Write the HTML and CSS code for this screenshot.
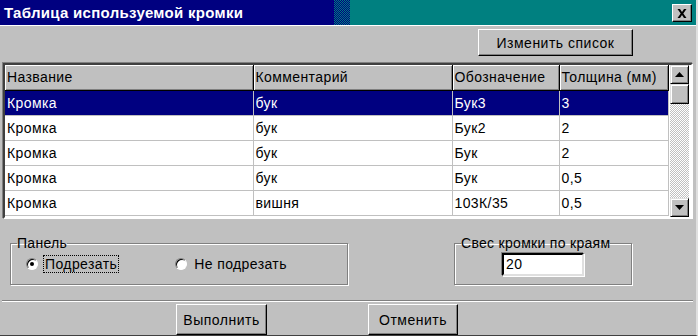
FILE: index.html
```html
<!DOCTYPE html>
<html lang="ru">
<head>
    <meta charset="UTF-8">
    <title>Таблица используемой кромки</title>
    <link rel="stylesheet" href="styles.css">
</head>
<body>
    <div class="window">
        <div class="titlebar">
            <span class="title">Таблица используемой кромки</span>
            <span class="dither"></span>
            <span class="teal"></span>
            <button class="close-btn">
                <svg width="10" height="9" viewBox="0 0 10 9"><path d="M0.5 0h2.5l2 3 2-3h2.5L6.3 4.5 9.5 9H7L5 6 3 9H0.5l3.2-4.5z" fill="#000"/></svg>
            </button>
        </div>

        <div class="client">
            <div class="toolbar">
                <button class="btn btn-edit">Изменить список</button>
            </div>

            <div class="grid">
                <div class="grid-body">
                    <table class="grid-table">
                        <thead>
                            <tr>
                                <th class="c1">Название</th>
                                <th class="c2">Комментарий</th>
                                <th class="c3">Обозначение</th>
                                <th class="c4">Толщина (мм)</th>
                            </tr>
                        </thead>
                        <tbody>
                            <tr class="selected"><td>Кромка</td><td>бук</td><td>Бук3</td><td>3</td></tr>
                            <tr><td>Кромка</td><td>бук</td><td>Бук2</td><td>2</td></tr>
                            <tr><td>Кромка</td><td>бук</td><td>Бук</td><td>2</td></tr>
                            <tr><td>Кромка</td><td>бук</td><td>Бук</td><td>0,5</td></tr>
                            <tr><td>Кромка</td><td>вишня</td><td>103К/35</td><td>0,5</td></tr>
                        </tbody>
                    </table>
                </div>
                <div class="scrollbar">
                    <div class="sb-btn">
                        <svg width="9" height="5" viewBox="0 0 9 5"><path d="M4.5 0L9 5H0z" fill="#000"/></svg>
                    </div>
                    <div class="sb-thumb"></div>
                    <div class="sb-track"></div>
                    <div class="sb-btn">
                        <svg width="9" height="5" viewBox="0 0 9 5"><path d="M0 0h9L4.5 5z" fill="#000"/></svg>
                    </div>
                </div>
            </div>

            <div class="options">
                <fieldset class="group group-panel">
                    <legend>Панель</legend>
                    <div class="radios">
                        <label class="radio checked"><span class="radio-dot"></span><span class="radio-label focus">Подрезать</span></label>
                        <label class="radio"><span class="radio-dot"></span><span class="radio-label">Не подрезать</span></label>
                    </div>
                </fieldset>
                <fieldset class="group group-overhang">
                    <legend>Свес кромки по краям</legend>
                    <div class="field">20</div>
                </fieldset>
            </div>

            <div class="footer">
                <button class="btn btn-run">Выполнить</button>
                <button class="btn btn-cancel">Отменить</button>
            </div>
        </div>
    </div>
</body>
</html>
```

FILE: styles.css
```css
* {
    margin: 0;
    padding: 0;
    box-sizing: border-box;
}

body {
    background-color: #c0c0c0;
    font-family: 'Liberation Sans', Arial, sans-serif;
    font-size: 14px;
    letter-spacing: 0.4px;
    color: #000;
}

.window {
    width: 698px;
    height: 336px;
    display: flex;
    flex-direction: column;
    background-color: #c0c0c0;
    border-right: 2px solid #dfdfdf;
    border-bottom: 1px solid #404040;
    overflow: hidden;
}

.titlebar {
    height: 26px;
    flex-shrink: 0;
    display: flex;
    align-items: center;
    background-color: #008080;
    border-bottom: 1px solid #fff;
    position: relative;
}

.title {
    width: 334px;
    height: 100%;
    display: flex;
    align-items: center;
    padding-left: 4px;
    background-color: #000080;
    color: #fff;
    font-weight: bold;
    font-size: 15px;
    letter-spacing: 0.3px;
}

.dither {
    width: 16px;
    height: 100%;
    background-image: repeating-conic-gradient(#000080 0 25%, #008080 0 50%);
    background-size: 2px 2px;
}

.teal {
    flex: 1;
    height: 100%;
}

.close-btn {
    position: absolute;
    right: 4px;
    top: 4px;
    width: 20px;
    height: 18px;
    display: flex;
    align-items: center;
    justify-content: center;
    background-color: #c0c0c0;
    border: 1px solid;
    border-color: #fff #000 #000 #fff;
    box-shadow: inset -1px -1px 0 #808080;
}

.client {
    flex: 1;
    display: flex;
    flex-direction: column;
    padding: 0 3px 0 2px;
}

.toolbar {
    height: 37px;
    flex-shrink: 0;
    display: flex;
    justify-content: flex-end;
    padding: 3px 60px 0 0;
}

.btn {
    font-family: 'Liberation Sans', Arial, sans-serif;
    font-size: 14px;
    letter-spacing: 0.5px;
    background-color: #c0c0c0;
    border: 1px solid;
    border-color: #fff #000 #000 #fff;
    box-shadow: inset -1px -1px 0 #808080;
    color: #000;
}

.btn-edit {
    width: 155px;
    height: 27px;
}

.grid {
    height: 156px;
    flex-shrink: 0;
    display: flex;
    background-color: #fff;
    border: 2px solid;
    border-color: #404040 #fff #fff #404040;
    box-shadow: -1px -1px 0 #808080;
    margin-left: 1px;
}

.grid-body {
    flex: 1;
    overflow: hidden;
}

.grid-table {
    border-collapse: collapse;
    table-layout: fixed;
    width: 663px;
}

.grid-table th,
.grid-table td {
    height: 25px;
    padding: 0 0 0 2px;
    text-align: left;
    font-weight: normal;
    white-space: nowrap;
    border-right: 1px solid #c0c0c0;
    border-bottom: 1px solid #c0c0c0;
}

.grid-table th {
    background-color: #c0c0c0;
    border-right: 1px solid #000;
    border-bottom: 1px solid #000;
    box-shadow: inset 1px 1px 0 #fff, inset -1px -1px 0 #808080;
}

.grid-table .c1 { width: 248px; }
.grid-table .c2 { width: 199px; }
.grid-table .c3 { width: 107px; }
.grid-table .c4 { width: 109px; }

.grid-table tr.selected td {
    background-color: #000080;
    color: #fff;
}

.scrollbar {
    width: 19px;
    margin-right: 2px;
    display: flex;
    flex-direction: column;
}

.sb-btn,
.sb-thumb {
    height: 19px;
    display: flex;
    align-items: center;
    justify-content: center;
    background-color: #c0c0c0;
    border: 1px solid;
    border-color: #dfdfdf #000 #000 #dfdfdf;
    box-shadow: inset 1px 1px 0 #fff, inset -1px -1px 0 #808080;
}

.sb-thumb {
    height: 20px;
}

.sb-track {
    flex: 1;
    background-image: repeating-conic-gradient(#c0c0c0 0 25%, #fff 0 50%);
    background-size: 2px 2px;
}

.options {
    height: 82px;
    flex-shrink: 0;
    display: flex;
    align-items: flex-start;
    padding: 16px 0 0 8px;
}

.group {
    border: 1px solid #808080;
    box-shadow: 1px 1px 0 #fff, inset 1px 1px 0 #fff;
    height: 50px;
}

.group legend {
    padding: 0;
    margin-left: 6px;
    font-size: 14px;
    letter-spacing: 0.3px;
}

.group-panel {
    width: 338px;
}

.radios {
    display: flex;
    align-items: center;
    padding: 4px 0 0 15px;
}

.radio {
    display: flex;
    align-items: center;
}

.radio + .radio {
    margin-left: 56px;
}

.radio-dot {
    width: 12px;
    height: 12px;
    border-radius: 50%;
    background-color: #fff;
    border: 1px solid;
    border-color: #808080 #fff #fff #808080;
    box-shadow: inset 1px 1px 0 #000;
    display: flex;
    align-items: center;
    justify-content: center;
    margin-right: 5px;
}

.radio.checked .radio-dot::after {
    content: "";
    width: 4px;
    height: 4px;
    border-radius: 50%;
    background-color: #000;
}

.radio-label {
    padding: 0 1px;
    border: 1px dotted transparent;
}

.radio-label.focus {
    border-color: #000;
}

.group-overhang {
    width: 178px;
    margin-left: 106px;
    display: flex;
    justify-content: center;
}

.field {
    width: 82px;
    height: 23px;
    margin-top: 2px;
    padding: 1px 0 0 2px;
    background-color: #fff;
    border: 2px solid;
    border-color: #000 #dfdfdf #dfdfdf #000;
    box-shadow: -1px -1px 0 #808080, 1px 1px 0 #fff;
}

.footer {
    flex: 1;
    display: flex;
    padding: 2px 0 0 174px;
    border-top: 1px solid #fff;
    box-shadow: 0 -1px 0 #808080;
}

.btn-run {
    width: 91px;
    height: 31px;
}

.btn-cancel {
    width: 90px;
    height: 31px;
    margin-left: 101px;
}
```
